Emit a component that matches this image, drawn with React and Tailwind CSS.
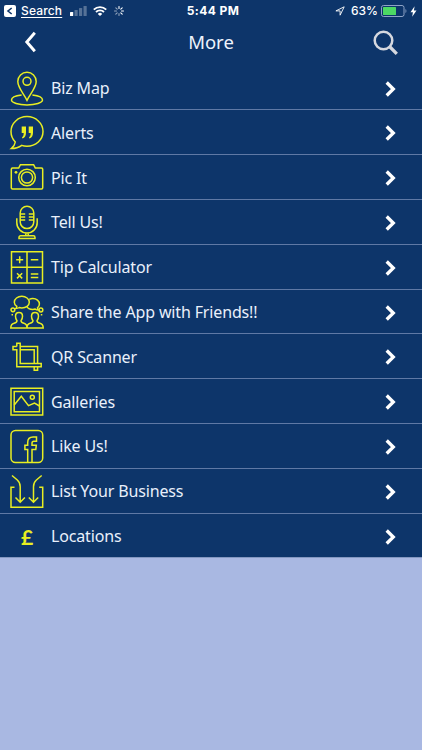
import React from 'react';

// Line icons, all drawn on the same 36x36 grid
const icons = {
  map: (
    <>
      <path d="M18 30.300C15 24.200 8.800 17.600 8.800 11.500a9.200 9.200 0 0 1 18.400 0C27.200 17.600 21 24.200 18 30.300Z" />
      <circle cx="18" cy="11.300" r="4" />
      <path d="M12.600 25C6.500 25.700 2.500 27.700 2.500 30c0 2.700 7 4.900 15.500 4.900s15.500-2.200 15.500-4.900c0-2.300-4-4.300-10.100-5" />
    </>
  ),
  alerts: (
    <>
      <path d="M2.300 34.600C4.600 32.600 6 30.300 6.300 28A14.800 14.800 0 0 1 2 17.500C2 9.200 9.200 2.600 18 2.600s16 6.600 16 14.900-7.200 14.700-16 14.700c-1.900 0-3.600-.2-5.200-.8-2.800 2-6.400 3.200-10.500 3.200Z" />
      <path d="M12.700 12.500h4.300v6.200c0 3-1.200 5.200-3.500 5.900l-.5-1.200c1.200-.8 1.700-2.200 1.700-4.300h-2ZM19.700 12.500H24v6.200c0 3-1.200 5.200-3.500 5.900l-.5-1.200c1.200-.8 1.700-2.200 1.700-4.300h-2Z" fill="currentColor" stroke="none" />
    </>
  ),
  camera: (
    <>
      <path d="M3.500 9h6.200l1.700-3.300h13.200L26.300 9h6.200c.7 0 1.200.5 1.200 1.200v18.600c0 .7-.5 1.200-1.200 1.200h-29c-.7 0-1.200-.5-1.200-1.200V10.200C2.300 9.500 2.800 9 3.500 9Z" />
      <circle cx="18" cy="18.500" r="8.300" />
      <circle cx="18" cy="18.500" r="5.600" />
      <circle cx="7" cy="13.300" r="1.400" fill="currentColor" stroke="none" />
    </>
  ),
  mic: (
    <>
      <rect x="11.200" y="2.300" width="13.600" height="22.300" rx="6.800" />
      <path d="M11.200 10h5M11.200 13h5M11.200 16h5M24.800 10h-5M24.800 13h-5M24.800 16h-5" />
      <path d="M7.800 14.200v4.500a10.200 10.200 0 0 0 20.400 0v-4.500M16.800 28.800v3M19.200 28.800v3M10 34.400v-1c0-.9.700-1.600 1.600-1.600h12.800c.9 0 1.600.7 1.600 1.600v1Z" />
    </>
  ),
  calculator: (
    <>
      <path d="M2.500 2.700h31v31.200h-31ZM18 2.700v31.200M2.500 18.300h31" />
      <path d="M7.200 10.700h7M10.700 7.200v7M21.800 10.700h7.500M8 24.200l5.200 5.200M13.200 24.200 8 29.400M21.800 25h7.500M21.800 28.600h7.500" />
    </>
  ),
  share: (
    <>
      <path d="M6.800 14.500c.8-.8 1.100-1.500 1-2.200C6.300 11.300 5.300 9.800 5.300 8.200c0-3.300 3.400-5.900 7.500-5.900s7.500 2.600 7.500 5.900-3.400 5.700-7.500 5.700c-.9 0-1.700-.1-2.500-.4-1 .7-2.200 1-3.500 1Z" />
      <path d="M20.200 5.400c1.100-.5 2.300-.8 3.600-.8 3.700 0 6.600 2.400 6.600 5.500 0 1.500-.7 2.900-1.900 3.800 0 1 .3 1.600 1.100 2.200-1.400 0-2.500-.3-3.400-1-.8.200-1.600.3-2.400.3-2.800 0-5.300-1.300-6.200-3.200" />
      <circle cx="3.900" cy="15.800" r="1.900" />
      <circle cx="31.900" cy="16" r="1.900" />
      <path d="M2.500 20.700h1.500M31.800 20.700h1.500" />
      <path d="M1.800 34.100c0-3.400.9-4.400 3.300-4.900 2-.4 2.900-1 2.900-2.400-1-1.300-1.500-2.900-1.500-4.600 0-2.400 1.400-3.700 3.500-3.700s3.500 1.300 3.500 3.700c0 1.700-.5 3.300-1.500 4.600 0 1.400.9 2 2.900 2.400 2.200.5 3.100 1.500 3.100 4.900ZM18 34.100c0-3.400.9-4.400 3.100-4.900 2-.4 2.900-1 2.900-2.400-1-1.300-1.500-2.900-1.500-4.600 0-2.400 1.400-3.700 3.500-3.700s3.500 1.300 3.500 3.700c0 1.700-.5 3.300-1.500 4.600 0 1.400.9 2 2.900 2.400 2.400.5 3.300 1.500 3.300 4.900Z" />
    </>
  ),
  crop: (
    <>
      <path d="M7.800 8.500V5.200h3.400v20.300h21v3.300H7.800V11.800H4V8.500h3.800" />
      <path d="M11.200 8.500h17.400v17M11.200 11.800h14v13.700M28.600 28.800v3.400h-3.400v-3.400" />
    </>
  ),
  gallery: (
    <>
      <path d="M2 5.300h31.700v26.800H2ZM5.200 8.500h25.300v20.300H5.200Z" />
      <path d="m5.200 22 7.100-8.700 7.200 9.300 6-2.600 5 3" />
      <circle cx="23.300" cy="14.300" r="2" />
    </>
  ),
  facebook: (
    <>
      <rect x="2" y="2.500" width="31.700" height="32" rx="4.500" />
      <path d="M18.700 34.500V21.400h-2.800v-4.100h2.800v-2.800c0-3.600 2-5.400 5.400-5.400h3.400v4.100h-2.600c-1.300 0-1.900.6-1.900 1.900v2.200h4.300l-.5 4.100H23v13.100" />
    </>
  ),
  inbox: (
    <>
      <path d="M5.500 14.200H2v20.100h31.700V14.200h-3.500" />
      <path d="M3 2.500 8.300 7c2 1.700 2.900 3.800 2.900 6.700v15.600M6.500 24.500l4.700 4.800 4.700-4.800M32.700 2.500 27.400 7c-2 1.700-2.900 3.800-2.900 6.700v15.600M19.800 24.500l4.700 4.800 4.700-4.800" />
    </>
  ),
};

const menuItems = [
  { label: 'Biz Map', icon: 'map' },
  { label: 'Alerts', icon: 'alerts' },
  { label: 'Pic It', icon: 'camera' },
  { label: 'Tell Us!', icon: 'mic' },
  { label: 'Tip Calculator', icon: 'calculator' },
  { label: 'Share the App with Friends!!', icon: 'share' },
  { label: 'QR Scanner', icon: 'crop' },
  { label: 'Galleries', icon: 'gallery' },
  { label: 'Like Us!', icon: 'facebook' },
  { label: 'List Your Business', icon: 'inbox' },
  { label: 'Locations', icon: null },
];

const StatusBar = () => (
  <div className="grid h-[22px] grid-cols-3 items-center pr-[5px] pl-1 font-['Inter',sans-serif] text-[12px] leading-none text-white">
    <div className="flex items-center">
      <svg width="12" height="12" viewBox="0 0 12 12">
        <rect width="12" height="12" rx="2" fill="white" />
        <path d="M7.700 3 4 6l3.700 3" fill="none" stroke="#0d356a" strokeWidth="1.600" />
      </svg>
      <span className="ml-[5px] font-medium tracking-[0.15px] underline underline-offset-2">Search</span>
      <svg className="ml-2" width="17" height="10" viewBox="0 0 17 10" fill="white">
        <rect y="6" width="3.200" height="4" rx=".6" />
        <rect x="4.500" y="4" width="3.200" height="6" rx=".6" opacity=".3" />
        <rect x="9" y="2" width="3.200" height="8" rx=".6" opacity=".3" />
        <rect x="13.500" width="3.200" height="10" rx=".6" opacity=".3" />
      </svg>
      <svg className="ml-[6px]" width="14" height="10" viewBox="0 0 14 10" fill="none" stroke="white" strokeWidth="1.900">
        <path d="M.8 3.600a8.900 8.900 0 0 1 12.400 0M3 6a5.800 5.800 0 0 1 8 0" />
        <path d="M7 10 4.800 7.900a3.200 3.200 0 0 1 4.400 0Z" fill="white" stroke="none" />
      </svg>
      <svg className="ml-[7px]" width="10" height="10" viewBox="0 0 10 10" stroke="white" strokeWidth="1.100" strokeLinecap="round">
        <path d="M5 .5v2M8.200 1.800 6.800 3.200M9.500 5h-2M8.200 8.200 6.800 6.800" />
        <path d="M5 9.500v-2M1.800 8.200l1.400-1.400M.5 5h2M1.800 1.800l1.400 1.400" opacity=".55" />
      </svg>
    </div>
    <div className="pl-[5px] text-center font-bold tracking-[0.4px]">5:44 PM</div>
    <div className="flex items-center justify-end">
      <svg width="10" height="10" viewBox="0 0 10 10" fill="none" stroke="white" strokeWidth=".9">
        <path d="M9.200.8.900 4.900h4.200v4.300Z" />
      </svg>
      <span className="ml-[6px] font-medium">63%</span>
      <svg className="ml-[3px]" width="27" height="12" viewBox="0 0 27 12">
        <rect x=".5" y=".5" width="22.500" height="11" rx="2" fill="none" stroke="#8ea3c6" />
        <rect x="2" y="2" width="13" height="8" rx=".5" fill="#4cd964" />
        <path d="M24.500 4c1.200.5 1.200 3.500 0 4Z" fill="#8ea3c6" />
      </svg>
      <svg className="ml-[2px]" width="7" height="11" viewBox="0 0 7 11" fill="white">
        <path d="M4.600.3.500 6.200h2.400l-.7 4.500 4.300-6.200H3.900Z" />
      </svg>
    </div>
  </div>
);

const Header = () => (
  <div className="grid h-[43.700px] grid-cols-3 items-center pr-6 pb-[3px] pl-6">
    <svg width="13" height="22" viewBox="0 0 13 22" fill="none" stroke="white" strokeWidth="2.900">
      <path d="M10.800 1.700 2.800 11l8 9.300" />
    </svg>
    <h1 className="text-center text-[18.500px] leading-none text-[#eef3fc]">More</h1>
    <svg className="justify-self-end" width="25" height="25" viewBox="0 0 25 25" fill="none" stroke="#d5d8df">
      <circle cx="10.500" cy="10.500" r="8.800" strokeWidth="2.500" />
      <path d="m17 17 6.800 6.800" strokeWidth="3.300" />
    </svg>
  </div>
);

const MenuRow = ({ label, icon }) => (
  <li className="flex h-[44.800px] items-center border-b border-[#5f79a5] pr-[26px] pl-[9px] last:border-[#8397c1]">
    <div className="flex w-9 justify-center text-[#e8ee22]">
      {icon ? (
        <svg width="36" height="36" viewBox="0 0 36 36" fill="none" stroke="currentColor" strokeWidth="1.500">
          {icons[icon]}
        </svg>
      ) : (
        <span className="pt-px font-['Lato',sans-serif] text-[21px] leading-none font-bold">£</span>
      )}
    </div>
    <span className="ml-[6px] flex-1 pt-px text-[16px] leading-none tracking-[-0.150px] text-[#e9f0fb]">{label}</span>
    <svg className="mt-[2px]" width="11" height="16" viewBox="0 0 11 16" fill="none" stroke="white" strokeWidth="3.300">
      <path d="m1.700 1.500 6.600 6.500-6.600 6.500" />
    </svg>
  </li>
);

const App = () => {
  return (
    <div className="h-[750px] w-[422px] overflow-hidden bg-[#a9b8e2] font-['Noto_Sans',sans-serif]">
      <div className="bg-[#0d356a]">
        <StatusBar />
        <Header />
        <ul>
          {menuItems.map((item) => (
            <MenuRow key={item.label} label={item.label} icon={item.icon} />
          ))}
        </ul>
      </div>
    </div>
  );
};

export default App;
